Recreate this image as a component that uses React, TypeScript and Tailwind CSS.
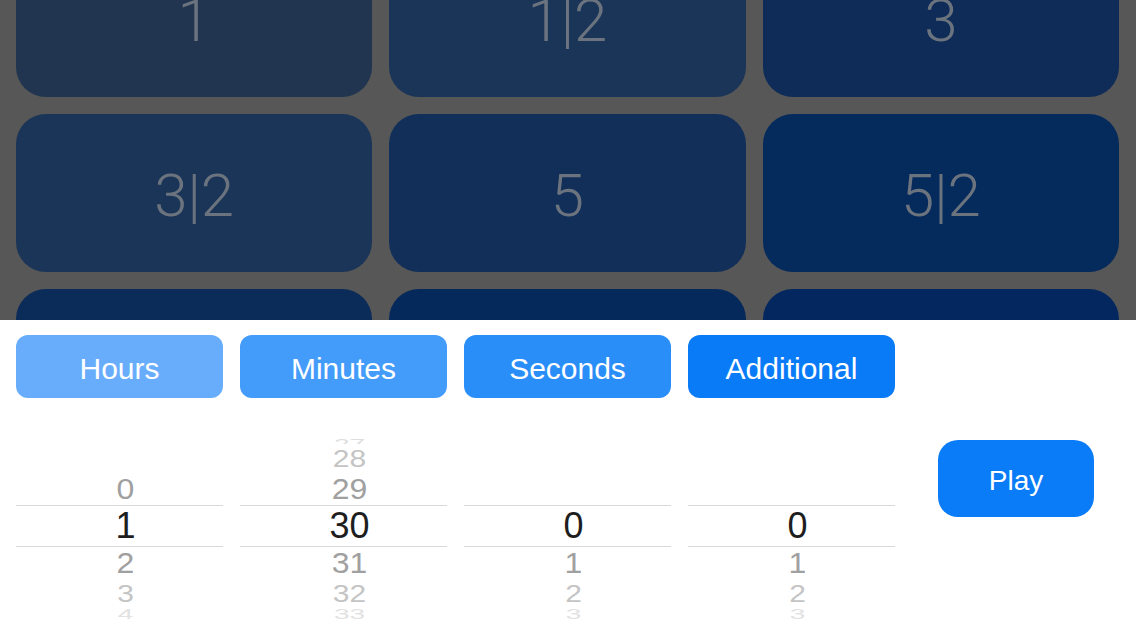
const tiles = [
  { label: "1", bg: "bg-[#213550]" },
  { label: "1|2", bg: "bg-[#1b3558]" },
  { label: "3", bg: "bg-[#0e2c57]" },
  { label: "3|2", bg: "bg-[#1a3557]" },
  { label: "5", bg: "bg-[#112f58]" },
  { label: "5|2", bg: "bg-[#052a5c]" },
  { label: "", bg: "bg-[#0b2b59]" },
  { label: "", bg: "bg-[#06295c]" },
  { label: "", bg: "bg-[#03275e]" },
];

const tabs = [
  { label: "Hours", bg: "bg-[#68adfc]" },
  { label: "Minutes", bg: "bg-[#449cfa]" },
  { label: "Seconds", bg: "bg-[#2a8ef9]" },
  { label: "Additional", bg: "bg-[#0a7bf7]" },
];

// each column: [-3, -2, -1, selected, +1, +2, +3]
const columns: (string | null)[][] = [
  [null, null, "0", "1", "2", "3", "4"],
  ["27", "28", "29", "30", "31", "32", "33"],
  [null, null, null, "0", "1", "2", "3"],
  [null, null, null, "0", "1", "2", "3"],
];

function PickerColumn({ values }: { values: (string | null)[] }) {
  return (
    <div className="w-[207px] flex flex-col items-stretch overflow-hidden">
      <div className="h-[19px] pl-[12px] flex items-end justify-center overflow-hidden">
        <span className="text-[28px] leading-none text-[#dedede] scale-y-[0.5] origin-bottom translate-y-[7px]">
          {values[0]}
        </span>
      </div>
      <div className="h-[29px] pl-[12px] flex items-center justify-center">
        <span className="text-[30px] leading-none text-[#c4c4c4] scale-y-[0.8]">{values[1]}</span>
      </div>
      <div className="h-[32px] pl-[12px] flex items-center justify-center">
        <span className="text-[32px] leading-none text-[#a0a0a0] scale-y-[0.92]">{values[2]}</span>
      </div>
      <div className="h-[42px] pl-[12px] flex items-center justify-center border-y-[1.5px] border-[#d9d9d9]">
        <span className="text-[36px] leading-none text-[#1e1e1e]">{values[3]}</span>
      </div>
      <div className="h-[32px] pl-[12px] flex items-center justify-center">
        <span className="text-[32px] leading-none text-[#a0a0a0] scale-y-[0.92]">{values[4]}</span>
      </div>
      <div className="h-[29px] pl-[12px] flex items-center justify-center">
        <span className="text-[30px] leading-none text-[#c4c4c4] scale-y-[0.8]">{values[5]}</span>
      </div>
      <div className="h-[14px] pl-[12px] flex items-start justify-center overflow-hidden">
        <span className="text-[28px] leading-none text-[#e2e2e2] scale-y-[0.5] origin-top -translate-y-[1px]">
          {values[6]}
        </span>
      </div>
    </div>
  );
}

export default function App() {
  return (
    <div className="w-[1136px] h-[639px] overflow-hidden bg-white font-['Liberation_Sans','Helvetica',sans-serif]">
      {/* dimmed keypad behind the sheet */}
      <div className="h-[320px] overflow-hidden bg-[#575757] pl-[16px] pr-[17px]">
        <div className="grid grid-cols-3 gap-[17px] -mt-[61px]">
          {tiles.map((t, i) => (
            <div
              key={i}
              className={`${t.bg} h-[158px] rounded-[30px] flex items-center justify-center pt-[6px]`}
            >
              <span className="font-['Roboto',sans-serif] font-light text-[60px] text-[#6b737e] leading-none">
                {t.label}
              </span>
            </div>
          ))}
        </div>
      </div>

      {/* timer sheet */}
      <div className="h-[319px] pl-[16px] pt-[15px]">
        <div className="flex gap-[17px]">
          {tabs.map((t) => (
            <button
              key={t.label}
              className={`${t.bg} w-[207px] h-[63px] pt-[3px] rounded-[12px] text-white text-[30px] flex items-center justify-center`}
            >
              {t.label}
            </button>
          ))}
        </div>
        <div className="flex mt-[27px]">
          <div className="flex gap-[17px]">
            {columns.map((c, i) => (
              <PickerColumn key={i} values={c} />
            ))}
          </div>
          <button className="ml-[43px] mt-[15px] w-[156px] h-[77px] pt-[4px] rounded-[20px] bg-[#0a7cf7] text-white text-[28px] flex items-center justify-center">
            Play
          </button>
        </div>
      </div>
    </div>
  );
}
